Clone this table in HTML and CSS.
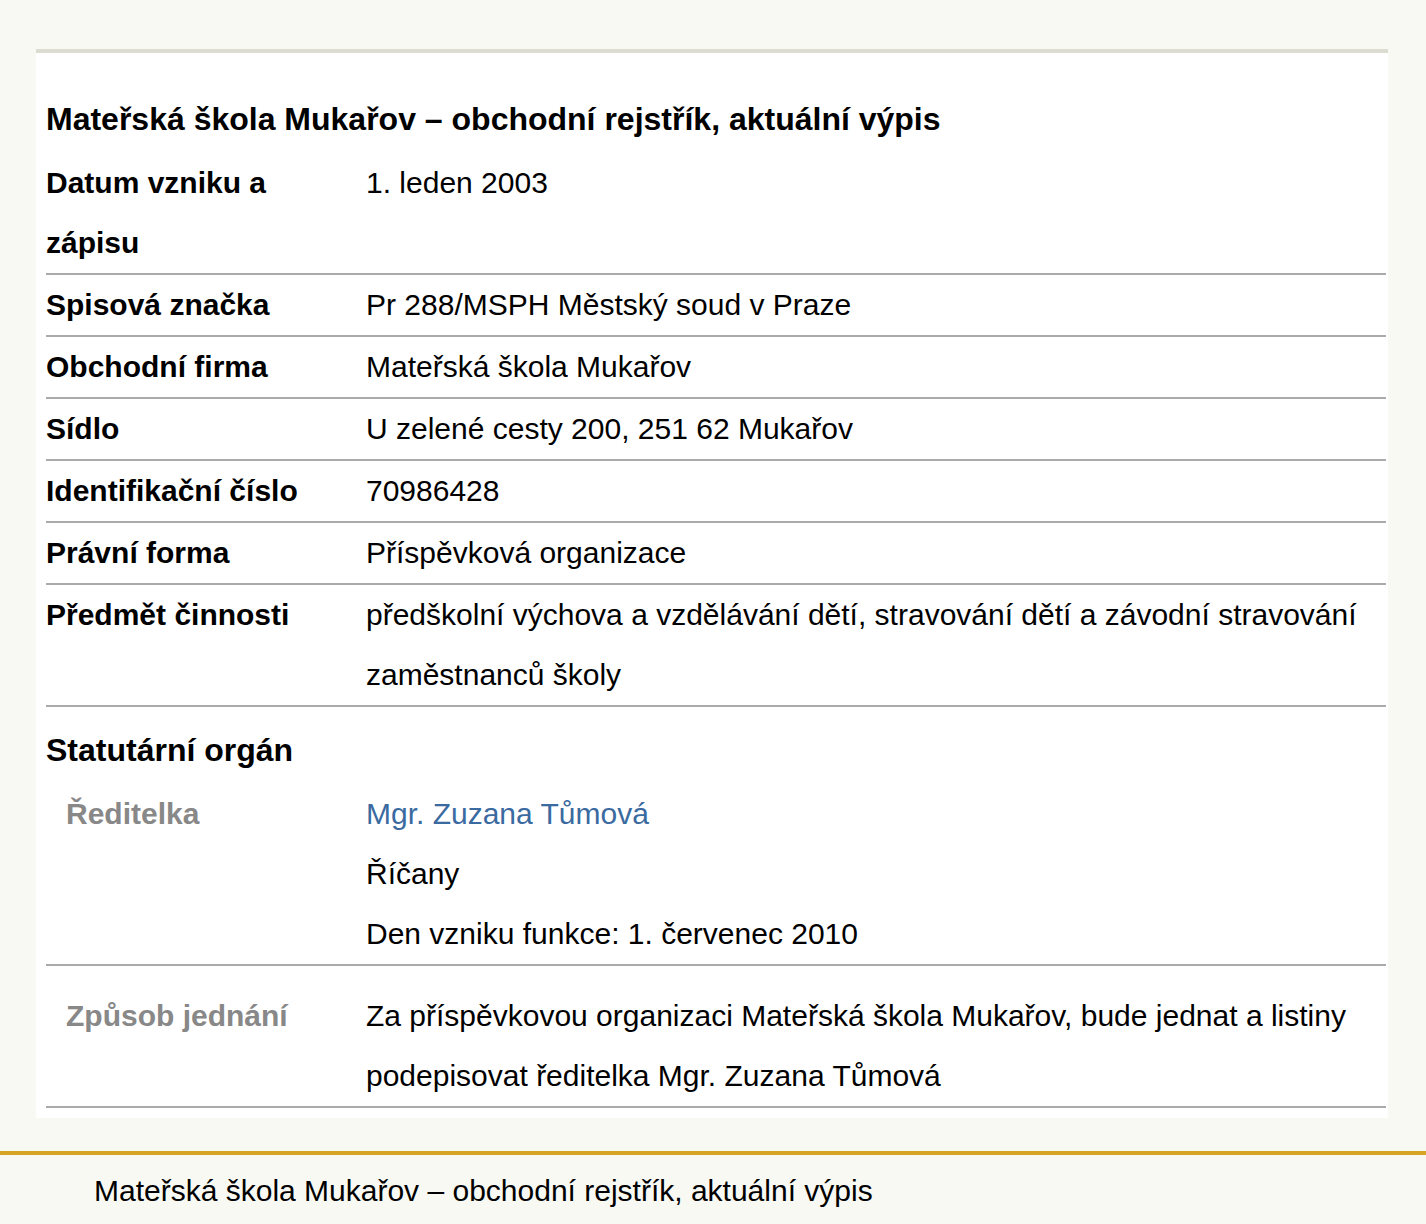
FILE: index.html
```html
<!DOCTYPE html>
<html lang="cs">
<head>
<meta charset="utf-8">
<title>Mateřská škola Mukařov – obchodní rejstřík, aktuální výpis</title>
<link rel="stylesheet" href="styles.css">
</head>
<body>
<main class="card">
  <h1 class="title">Mateřská škola Mukařov – obchodní rejstřík, aktuální výpis</h1>
  <div class="row">
    <div class="label">Datum vzniku a zápisu</div>
    <div class="value">1. leden 2003</div>
  </div>
  <div class="row">
    <div class="label">Spisová značka</div>
    <div class="value">Pr 288/MSPH Městský soud v Praze</div>
  </div>
  <div class="row">
    <div class="label">Obchodní firma</div>
    <div class="value">Mateřská škola Mukařov</div>
  </div>
  <div class="row">
    <div class="label">Sídlo</div>
    <div class="value">U zelené cesty 200, 251 62 Mukařov</div>
  </div>
  <div class="row">
    <div class="label">Identifikační číslo</div>
    <div class="value">70986428</div>
  </div>
  <div class="row">
    <div class="label">Právní forma</div>
    <div class="value">Příspěvková organizace</div>
  </div>
  <div class="row">
    <div class="label">Předmět činnosti</div>
    <div class="value">předškolní výchova a vzdělávání dětí, stravování dětí a závodní stravování zaměstnanců školy</div>
  </div>
  <h2 class="section">Statutární orgán</h2>
  <div class="row">
    <div class="label sub">Ředitelka</div>
    <div class="value">
      <a class="link" href="#">Mgr. Zuzana Tůmová</a><br>
      Říčany<br>
      Den vzniku funkce: 1. červenec 2010
    </div>
  </div>
  <div class="row spaced">
    <div class="label sub">Způsob jednání</div>
    <div class="value">Za příspěvkovou organizaci Mateřská škola Mukařov, bude jednat a listiny podepisovat ředitelka Mgr. Zuzana Tůmová</div>
  </div>
</main>
<footer class="footer">Mateřská škola Mukařov – obchodní rejstřík, aktuální výpis</footer>
</body>
</html>
```
FILE: styles.css
```css
html, body {
  margin: 0;
  padding: 0;
  background: #f9f9f4;
  font-family: "Liberation Sans", Arial, sans-serif;
  color: #000;
}
body {
  padding-top: 49px;
}
.card {
  margin: 0 38px 0 36px;
  background: #fff;
  border-top: 4px solid #dcdcd0;
  padding: 46px 2px 10px 10px;
}
.title {
  margin: 0 0 14px 0;
  font-size: 32px;
  line-height: 40px;
  font-weight: bold;
}
.row {
  display: grid;
  grid-template-columns: 320px 1fr;
  border-bottom: 2px solid #aaa;
  font-size: 30px;
  line-height: 60px;
}
.row.spaced {
  padding-top: 20px;
}
.label {
  font-weight: bold;
  padding-right: 20px;
}
.label.sub {
  color: #888;
  padding-left: 20px;
}
.value {
  padding-right: 20px;
}
.link {
  color: #3a6a9f;
  text-decoration: none;
}
.section {
  margin: 0;
  padding: 23px 0 14px;
  font-size: 32px;
  line-height: 40px;
  font-weight: bold;
}
.footer {
  margin-top: 33px;
  border-top: 4px solid #d6a324;
  padding: 16px 0 0 94px;
  font-size: 30px;
  line-height: 40px;
  height: 66px;
}
```
